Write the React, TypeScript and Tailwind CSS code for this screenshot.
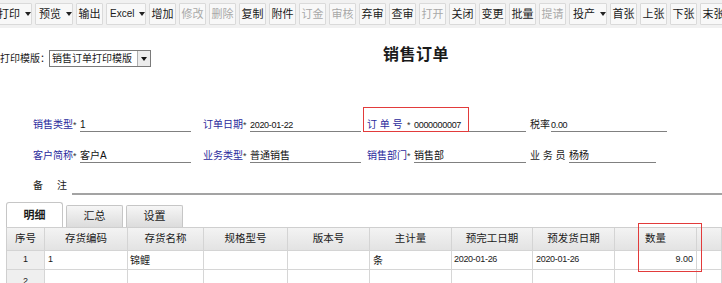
import React from 'react';

type Btn = { t: string; dd?: boolean; dis?: boolean };

const buttons: Btn[] = [
  { t: '打印', dd: true },
  { t: '预览', dd: true },
  { t: '输出' },
  { t: 'Excel', dd: true },
  { t: '增加' },
  { t: '修改', dis: true },
  { t: '删除', dis: true },
  { t: '复制' },
  { t: '附件' },
  { t: '订金', dis: true },
  { t: '审核', dis: true },
  { t: '弃审' },
  { t: '查审' },
  { t: '打开', dis: true },
  { t: '关闭' },
  { t: '变更' },
  { t: '批量' },
  { t: '提请', dis: true },
  { t: '投产', dd: true },
  { t: '首张' },
  { t: '上张' },
  { t: '下张' },
  { t: '末张' },
];

function Arrow() {
  return (
    <svg width="6" height="4" viewBox="0 0 6 4" className="ml-[5px] shrink-0">
      <path d="M0 0H6L3 4Z" fill="#222" />
    </svg>
  );
}

function ToolButton({ b, first }: { b: Btn; first: boolean }) {
  // width depends on whether there is a dropdown arrow
  const width = b.t === 'Excel' ? 'w-[40px]' : b.dd ? 'w-[38px]' : 'w-[27px]';
  return (
    <div
      className={`${width} ${first ? '-ml-[6px]' : ''} h-[22px] shrink-0 flex items-center ${
        b.dd ? 'justify-start pl-[3px]' : 'justify-center'
      } border border-[#dadada] bg-[#f8f8f8] rounded-[1px]`}
    >
      <span
        className={`${b.t === 'Excel' ? 'text-[10px]' : 'text-[11px]'} leading-[12px] whitespace-nowrap ${
          b.dis ? 'text-[#a8a8a8]' : 'text-[#1a1a1a]'
        }`}
      >
        {b.t}
      </span>
      {b.dd && <Arrow />}
    </div>
  );
}

// A labelled field with an underline, like the old desktop form
function Field({
  label,
  blue = true,
  star = true,
  value,
  labelW,
  lineW,
  after,
  mono = false,
}: {
  label: string;
  blue?: boolean;
  star?: boolean;
  value: string;
  labelW: string;
  lineW: string;
  after: string;
  mono?: boolean;
}) {
  return (
    <div className={`flex items-end shrink-0 ${after}`}>
      <span
        className={`${labelW} text-[10px] leading-[12px] mb-[1px] whitespace-pre ${
          blue ? 'text-[#2a2a9c]' : 'text-[#1a1a1a]'
        }`}
      >
        {label}
      </span>
      {star && <span className="w-[7px] text-[9px] leading-[12px] mb-[1px] text-[#333]">*</span>}
      <div className={`${lineW} h-[14px] border-b border-[#808080] flex items-end`}>
        <span
          className={`${
            mono ? 'text-[9px] tracking-[-0.3px]' : 'text-[10px]'
          } leading-[12px] text-[#111] whitespace-nowrap`}
        >
          {value}
        </span>
      </div>
    </div>
  );
}

const cols = ['序号', '存货编码', '存货名称', '规格型号', '版本号', '主计量', '预完工日期', '预发货日期', '数量', ''];

export default function App() {
  return (
    <div className="relative w-[722px] h-[283px] overflow-hidden bg-white text-[#1a1a1a] font-['Liberation_Sans','Noto_Sans_CJK_SC',sans-serif]">
      {/* Toolbar */}
      <div className="h-[28px] bg-[#f1f1f1] flex items-center gap-[3px] overflow-hidden">
        {buttons.map((b, i) => (
          <ToolButton key={b.t} b={b} first={i === 0} />
        ))}
      </div>

      {/* Template select + title */}
      <div className="mt-[16px] h-[24px] flex items-start">
        <div className="mt-[6px] flex items-center">
          <span className="w-[49px] text-[10px] leading-[17px] whitespace-nowrap">打印模版：</span>
          <div className="w-[102px] h-[17px] border border-[#7a7a7a] flex items-center bg-white">
            <span className="flex-1 pl-[2px] text-[10px] leading-[12px] whitespace-nowrap">销售订单打印模版</span>
            <div className="w-[13px] h-[15px] border-l border-[#b0b0b0] bg-[#ececec] flex items-center justify-center">
              <svg width="6" height="4" viewBox="0 0 6 4">
                <path d="M0 0H6L3 4Z" fill="#111" />
              </svg>
            </div>
          </div>
        </div>
        <div className="ml-[232px] mt-[1px] text-[16px] leading-[20px] font-semibold tracking-[0.5px]">销售订单</div>
      </div>

      {/* Row 1 */}
      <div className="mt-[44px] h-[20px] flex items-end pl-[33px]">
        <Field label="销售类型" value="1" labelW="w-[40px]" lineW="w-[111px]" after="mr-[12px]" />
        <Field label="订单日期" value="2020-01-22" mono labelW="w-[40px]" lineW="w-[111px]" after="mr-[6px]" />
        <Field label="订 单 号" value="0000000007" mono labelW="w-[40px]" lineW="w-[112px]" after="mr-[4px]" />
        <Field label="税率" value="0.00" mono blue={false} star={false} labelW="w-[21px]" lineW="w-[116px]" after="" />
      </div>

      {/* Row 2 */}
      <div className="mt-[11px] h-[20px] flex items-end pl-[33px]">
        <Field label="客户简称" value="客户A" labelW="w-[40px]" lineW="w-[111px]" after="mr-[12px]" />
        <Field label="业务类型" value="普通销售" labelW="w-[40px]" lineW="w-[111px]" after="mr-[6px]" />
        <Field label="销售部门" value="销售部" labelW="w-[40px]" lineW="w-[112px]" after="mr-[4px]" />
        <Field label="业 务 员" value="杨杨" blue={false} star={false} labelW="w-[39px]" lineW="w-[87px]" after="" />
      </div>

      {/* Row 3 - remarks */}
      <div className="mt-[12px] h-[20px] flex items-end pl-[33px]">
        <span className="w-[39px] text-[10px] leading-[12px] mb-[3px] whitespace-pre">备     注</span>
        <div className="flex-1 h-[2px] bg-[#a3a3a3]" />
      </div>

      {/* Tabs */}
      <div className="mt-[7px] h-[25px] flex items-end pl-[6px] gap-[3px]">
        <div className="w-[57px] h-[25px] border border-b-0 border-[#c6c6c6] rounded-t-[3px] bg-white flex items-center justify-center text-[11px] font-bold">
          明细
        </div>
        <div className="w-[57px] h-[22px] border border-b-0 border-[#c6c6c6] rounded-t-[2px] bg-gradient-to-b from-[#f6f6f6] to-[#dcdcdc] flex items-center justify-center text-[11px]">
          汇总
        </div>
        <div className="w-[57px] h-[22px] border border-b-0 border-[#c6c6c6] rounded-t-[2px] bg-gradient-to-b from-[#f6f6f6] to-[#dcdcdc] flex items-center justify-center text-[11px]">
          设置
        </div>
      </div>

      {/* Detail grid */}
      <div className="ml-[6px] grid grid-cols-[38px_83px_76px_84px_82px_82px_81px_82px_82px_1fr] border-t border-l border-[#cfcfcf] text-[10px]">
        {cols.map((c, i) => (
          <div
            key={'h' + i}
            className="h-[23px] border-r border-b border-[#d4d4d4] bg-gradient-to-b from-[#f3f3f3] to-[#e3e3e3] flex items-center justify-center text-[10.5px]"
          >
            {c}
          </div>
        ))}

        <div className="h-[19px] border-r border-b border-[#d6d6d6] bg-[#efefef] flex items-center justify-center text-[9px]">1</div>
        <div className="h-[19px] border-r border-b border-[#d6d6d6] flex items-center pl-[3px] text-[9px]">1</div>
        <div className="h-[19px] border-r border-b border-[#d6d6d6] flex items-center pl-[2px]">锦鲤</div>
        <div className="h-[19px] border-r border-b border-[#d6d6d6]" />
        <div className="h-[19px] border-r border-b border-[#d6d6d6]" />
        <div className="h-[19px] border-r border-b border-[#d6d6d6] flex items-center pl-[3px]">条</div>
        <div className="h-[19px] border-r border-b border-[#d6d6d6] flex items-center pl-[2px] text-[9px] tracking-[-0.3px]">2020-01-26</div>
        <div className="h-[19px] border-r border-b border-[#d6d6d6] flex items-center pl-[3px] text-[9px] tracking-[-0.3px]">2020-01-26</div>
        <div className="h-[19px] border-r border-b border-[#d6d6d6] flex items-center justify-end pr-[3px] text-[9px]">9.00</div>
        <div className="h-[19px] border-r border-b border-[#d6d6d6]" />

        <div className="h-[19px] border-r border-b border-[#d6d6d6] bg-[#efefef] flex items-end justify-center text-[9px]">2</div>
        {[1, 2, 3, 4, 5, 6, 7, 8, 9].map((k) => (
          <div key={'r2' + k} className="h-[19px] border-r border-b border-[#d6d6d6]" />
        ))}
      </div>

      {/* Red highlight annotations */}
      <div className="absolute left-[363px] top-[107px] w-[106px] h-[25px] border border-[#e23b3b] pointer-events-none" />
      <div className="absolute left-[638px] top-[223px] w-[64px] h-[49px] border border-[#e23b3b] pointer-events-none" />
    </div>
  );
}
